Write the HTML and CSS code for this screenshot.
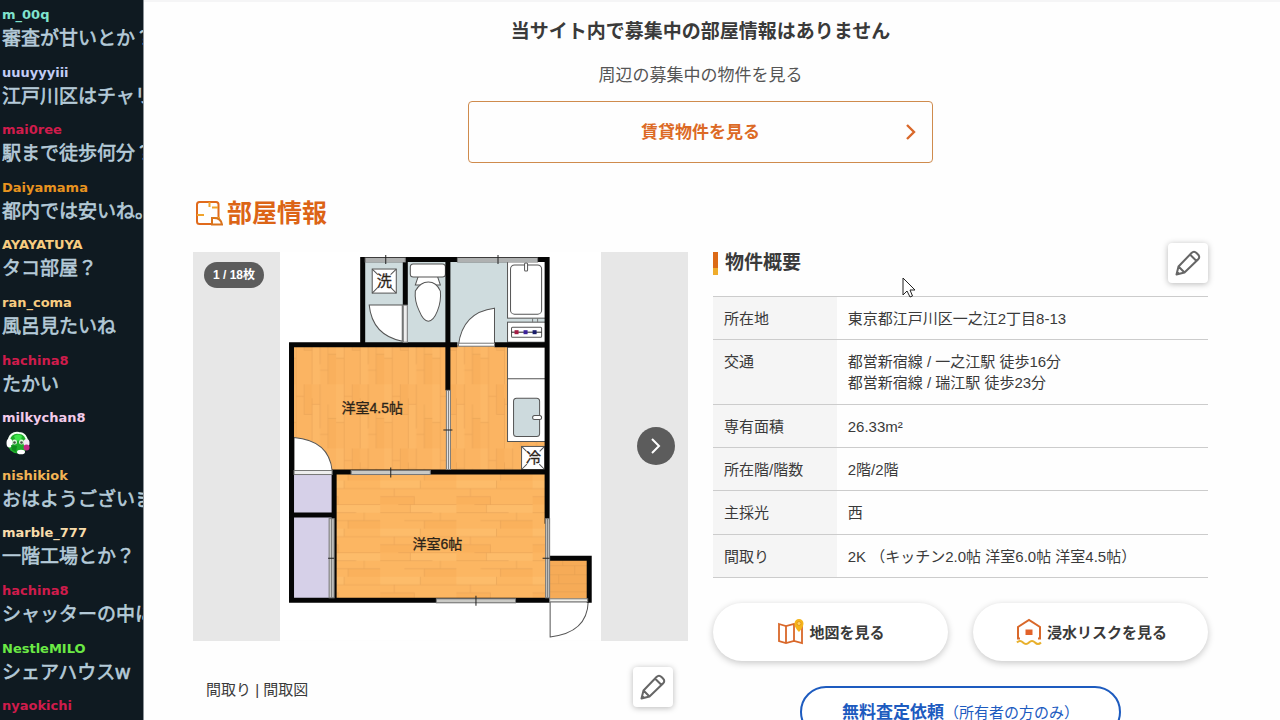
FILE: index.html
```html
<!DOCTYPE html>
<html lang="ja">
<head>
<meta charset="utf-8">
<meta name="viewport" content="width=device-width, initial-scale=1">
<title>部屋情報</title>
<link rel="stylesheet" href="styles.css">
</head>
<body>
<div class="layout">
  <aside class="chat">
    <ul class="chat-list">
      <li class="chat-item"><b class="chat-name mint">m_00q</b><p class="chat-text">審査が甘いとか？</p></li>
      <li class="chat-item"><b class="chat-name periwinkle">uuuyyyiii</b><p class="chat-text">江戸川区はチャリ</p></li>
      <li class="chat-item"><b class="chat-name crimson">mai0ree</b><p class="chat-text">駅まで徒歩何分？</p></li>
      <li class="chat-item"><b class="chat-name orange">Daiyamama</b><p class="chat-text">都内では安いね。</p></li>
      <li class="chat-item"><b class="chat-name sand">AYAYATUYA</b><p class="chat-text">タコ部屋？</p></li>
      <li class="chat-item"><b class="chat-name sand">ran_coma</b><p class="chat-text">風呂見たいね</p></li>
      <li class="chat-item"><b class="chat-name crimson">hachina8</b><p class="chat-text">たかい</p></li>
      <li class="chat-item"><b class="chat-name pink">milkychan8</b>
        <p class="chat-text emote-line"><svg class="emote" viewBox="0 0 24 24" aria-label="emote">
          <circle cx="12" cy="12" r="10.500" fill="#1fae2b"/>
          <path d="M3 12C2 4 8 1 13 2c5 0 8 4 8 9" fill="none" stroke="#f3fff3" stroke-width="2"/>
          <path d="M8 5q4-3 8 0l-1 4-5 1z" fill="#3ee64b"/>
          <ellipse cx="3.500" cy="12" rx="3" ry="4.500" fill="#fff"/>
          <ellipse cx="20.500" cy="12" rx="3" ry="4" fill="#f4e9f4"/>
          <circle cx="8.500" cy="11" r="2.500" fill="#d9f5d6"/><circle cx="15.500" cy="11" r="2.500" fill="#d9f5d6"/>
          <circle cx="8.500" cy="11.500" r="1.300" fill="#3c5540"/><circle cx="15.500" cy="11.500" r="1.300" fill="#3c5540"/>
          <path d="M5 14l6 1-1 6-4-2z" fill="#0f8c1d"/>
          <circle cx="20.500" cy="16.500" r="3" fill="#c22a86"/>
          <ellipse cx="15" cy="21" rx="4" ry="2.300" fill="#fff"/>
        </svg></p></li>
      <li class="chat-item"><b class="chat-name gold">nishikiok</b><p class="chat-text">おはようございます</p></li>
      <li class="chat-item"><b class="chat-name cream">marble_777</b><p class="chat-text">一階工場とか？</p></li>
      <li class="chat-item"><b class="chat-name crimson">hachina8</b><p class="chat-text">シャッターの中に</p></li>
      <li class="chat-item"><b class="chat-name lime">NestleMILO</b><p class="chat-text">シェアハウスw</p></li>
      <li class="chat-item"><b class="chat-name crimson">nyaokichi</b></li>
    </ul>
  </aside>

  <main class="page">
    <section class="vacancy">
      <h1 class="vacancy-title">当サイト内で募集中の部屋情報はありません</h1>
      <p class="vacancy-note">周辺の募集中の物件を見る</p>
      <a class="rent-link" href="#rent">
        <span class="rent-label">賃貸物件を見る</span>
        <svg class="rent-arrow" viewBox="0 0 12 18"><path d="M2 2l7 7-7 7" fill="none" stroke="#d9682a" stroke-width="2.400"/></svg>
      </a>
    </section>

    <h2 class="section-title">
      <svg class="section-icon" viewBox="0 0 28 26" fill="none" stroke-width="2">
        <path d="M17 24H4.500Q2 24 2 21.500V4.500Q2 2 4.500 2H21q2.500 0 2.500 2.500V17" stroke="#e06a1c"/>
        <path d="M14.500 2v5M2 15h7M17 7.500h6M17 24v-6h8" stroke="#f0a32c"/>
        <path d="M17 24.500v-6.500q9-1 10 6.500z" stroke="#d9731c"/>
      </svg>
      部屋情報
    </h2>

    <div class="columns">
      <section class="media">
        <div class="gallery">
          <span class="counter">1 / 18枚</span>
          <svg class="plan" viewBox="280 252 321 388" role="img" aria-label="間取図">
            <defs>
              <pattern id="woodV" width="48" height="64" patternUnits="userSpaceOnUse">
                <rect width="48" height="64" fill="#fbb462"/>
                <path d="M0 0h8v38H0zM24 20h8v44h-8z" fill="#fcb867"/>
                <path d="M16 0h8v30h-8zM40 34h8v30h-8z" fill="#f9b05d"/>
                <path d="M8 0v64M16 0v30M24 14v50M32 0v44M40 20v44M0 38h8M8 12h8M16 30h8M24 20h8M32 50h8M40 34h8" stroke="#e39f53" stroke-width=".5" fill="none"/>
              </pattern>
              <pattern id="woodH" width="76" height="48" patternUnits="userSpaceOnUse">
                <rect width="76" height="48" fill="#fcb662"/>
                <path d="M0 0h40v8H0zM30 24h46v8H30z" fill="#fdbc6a"/>
                <path d="M0 16h34v8H0zM44 40h32v8H44z" fill="#fab15c"/>
                <path d="M0 8h76M0 16h34M18 24h58M0 32h52M24 40h52M40 0v8M14 8v8M34 16v8M30 24v8M60 32v8M44 40v8" stroke="#e39f53" stroke-width=".5" fill="none"/>
              </pattern>
            </defs>
            <rect x="280" y="252" width="321" height="388" fill="#fff"/>
            <!-- floors -->
            <rect x="363" y="259" width="184" height="85" fill="#cfdcde"/>
            <rect x="292" y="345" width="156" height="126" fill="url(#woodV)"/>
            <rect x="448" y="345" width="99" height="126" fill="url(#woodV)"/>
            <rect x="334" y="472" width="213" height="127" fill="url(#woodH)"/>
            <rect x="549" y="557" width="40" height="41" fill="#f6ab57"/>
            <path d="M549 565h38M549 574h38M549 583h38M549 591h38M562 557v8M574 565v9M558 574v9" stroke="#e39f53" stroke-width=".5"/>
            <rect x="292" y="473" width="40" height="126" fill="#d6d0e8"/>
            <!-- fixtures -->
            <g fill="#fff" stroke="#555" stroke-width="1">
              <rect x="372" y="269" width="24" height="24"/>
              <path d="M372 269l24 24M396 269l-24 24" stroke-dasharray="8 18 20"/>
              <path d="M402 305v36Q372 335 369 305z"/>
              <path d="M418 276l-3 9h25l-3-9z"/>
              <rect x="410" y="264" width="35" height="13" rx="3"/>
              <path d="M415 291q5-9 13-9t12 9q1 10-3 20-4 10-9 10t-9-10q-5-10-4-20z"/>
              <rect x="507" y="261" width="38" height="57"/>
              <rect x="510" y="265" width="31" height="49" rx="4"/>
              <rect x="524" y="263" width="3" height="8" rx="1"/>
              <rect x="507" y="322" width="38" height="20"/>
              <rect x="511" y="327" width="30" height="10" rx="1"/>
              <path d="M494 345v-37q-32 4-36 37z"/>
              <path d="M507 347v94h39v-94zM507 378.500h39"/>
              <rect x="513" y="398" width="26" height="38" rx="3" fill="#cddadd"/>
              <rect x="532" y="415" width="9" height="4" rx="2"/>
              <rect x="521" y="446" width="23" height="23"/>
              <path d="M521 446l23 23M544 446l-23 23" stroke-dasharray="7 18 20"/>
              <path d="M294 437q35 3 38 33h-38z"/>
              <path d="M549.500 601v35q37-4 38-35z"/>
            </g>
            <path d="M511 332h30" stroke="#222"/>
            <path d="M514 330h4v4h-4z" fill="#a51d46"/><path d="M523 330h4v4h-4z" fill="#3c219b"/><path d="M532 330h4v4h-4z" fill="#191c6b"/>
            <path d="M532 318v4M537 318v4" stroke="#777"/>
            <!-- walls -->
            <g fill="none" stroke="#050505" stroke-width="5">
              <path d="M362.500 257v87M360 259.500h189M546.500 257v266M291.500 342v260M289 344.500h168M494 344.500h54M405 259v46M447.500 259v131M332 471.500h216M334 470v132M289 599.500h260M291 514.500h43M549 557.500h42M588.500 555v47"/>
            </g>
            <!-- windows and sliding doors -->
            <g fill="#c9c9c5" stroke="#777" stroke-width="1">
              <path d="M365 258h40v4h-40zM457 258h80v4h-80z" fill="#e8ecec"/>
              <path d="M365 260h40M457 260h80"/>
              <rect x="446" y="390" width="4" height="79" fill="#eee"/><path d="M448 390v79"/>
              <rect x="351" y="470" width="79" height="4"/><rect x="436" y="598" width="79" height="4"/>
              <rect x="545" y="518" width="4" height="79"/><path d="M547 518v79"/>
              <rect x="329" y="518" width="5" height="79"/><path d="M331.500 518v79"/>
              <rect x="403" y="305" width="4" height="37" fill="#eee"/>
              <rect x="294" y="470" width="38" height="4" fill="#eee"/>
              <rect x="549" y="598" width="38" height="3" fill="#f3f3ef"/>
              <rect x="458" y="343" width="36" height="3" fill="#fff"/>
            </g>
            <path d="M385.500 255v9M497.500 255v9M443 429.500h9M390.500 467v10M475.500 595v10M542 557.500h7M328 557.500h6" stroke="#222"/>
            <g class="plan-text">
              <text x="384" y="286" class="plan-mark">洗</text>
              <text x="533" y="463" class="plan-mark">冷</text>
              <text x="372" y="413">洋室4.5帖</text>
              <text x="437" y="548">洋室6帖</text>
            </g>
          </svg>
          <button class="next" type="button" aria-label="次へ">
            <svg viewBox="0 0 12 18"><path d="M2 2l7 7-7 7" fill="none" stroke="#fff" stroke-width="2"/></svg>
          </button>
        </div>
        <div class="caption">
          <span class="caption-text">間取り | 間取図</span>
          <button class="edit" type="button" aria-label="編集">
            <svg viewBox="0 0 26 26"><path d="M1.500 24.500L3.500 16.500 16.500 3q2.500-2.500 5 0l1.500 1.500q2.500 2.500 0 5L9.500 22.500zM15 4.500l6.500 6.500M3.500 16.500l6 6M2 22l2 2"/></svg>
          </button>
        </div>
      </section>

      <section class="summary">
        <header class="summary-head">
          <h3 class="summary-title">物件概要</h3>
          <button class="edit" type="button" aria-label="編集">
            <svg viewBox="0 0 26 26"><path d="M1.500 24.500L3.500 16.500 16.500 3q2.500-2.500 5 0l1.500 1.500q2.500 2.500 0 5L9.500 22.500zM15 4.500l6.500 6.500M3.500 16.500l6 6M2 22l2 2"/></svg>
          </button>
        </header>
        <table class="specs">
          <tbody>
            <tr><th scope="row">所在地</th><td>東京都江戸川区一之江2丁目8-13</td></tr>
            <tr><th scope="row">交通</th><td>都営新宿線 / 一之江駅 徒歩16分<br>都営新宿線 / 瑞江駅 徒歩23分</td></tr>
            <tr><th scope="row">専有面積</th><td>26.33m²</td></tr>
            <tr><th scope="row">所在階/階数</th><td>2階/2階</td></tr>
            <tr><th scope="row">主採光</th><td>西</td></tr>
            <tr><th scope="row">間取り</th><td>2K （キッチン2.0帖 洋室6.0帖 洋室4.5帖）</td></tr>
          </tbody>
        </table>
        <div class="actions">
          <button class="pill" type="button">
            <svg viewBox="0 0 28 28" fill="none" stroke="#d9682a" stroke-width="1.800">
              <path d="M3 6l7 2 8-2 8 2v17l-8-2-8 2-7-2zM10 8v17M18 6v17"/>
              <path d="M23 14q-5-5-4.500-8.500a4.500 4.500 0 0 1 9 0Q27.500 9 23 14z" fill="#f5b51b" stroke="none"/>
              <circle cx="23" cy="5.500" r="2" fill="#f9d36b" stroke="#e89a1a" stroke-width="1"/>
            </svg>
            地図を見る
          </button>
          <button class="pill" type="button">
            <svg viewBox="0 0 28 28" fill="none" stroke="#d9682a" stroke-width="2">
              <path d="M6 20.500H4V9L15 2l11 7v11.500h-2"/>
              <path d="M11.500 11.500h7v5.500h-7z" fill="#e2622a" stroke="none"/>
              <path d="M3 24.500q3-3 6 0t6 0 6 0 6 0" stroke="#e8b02c"/>
            </svg>
            浸水リスクを見る
          </button>
        </div>
        <button class="assess" type="button"><b>無料査定依頼</b><span>（所有者の方のみ）</span></button>
      </section>
    </div>
  </main>
</div>
<svg class="cursor" viewBox="0 0 14 22" aria-hidden="true"><path d="M1 1v17l4-4 3 6 2.500-1-2.500-6h5z" fill="#fff" stroke="#222" stroke-width="1"/></svg>
</body>
</html>
```
FILE: styles.css
```css
* { box-sizing: border-box; }
body {
  margin: 0;
  background: #fefefe;
  color: #3a3a3a;
  font-family: "Liberation Sans", "Noto Sans CJK JP", sans-serif;
  font-size: 15px;
  line-height: 21px;
}
h1, h2, h3, p, ul { margin: 0; padding: 0; }
button { font: inherit; color: inherit; cursor: pointer; }

.layout { display: flex; height: 100vh; overflow: hidden; }

/* chat sidebar */
.chat {
  flex: 0 0 144px;
  overflow: hidden;
  background: #0f1a21;
  border-right: 1px solid #8b9297;
}
.chat-list { list-style: none; display: grid; grid-auto-rows: 8vh; padding: 5px 0 0 2px; }
.chat-item { white-space: nowrap; }
.chat-name {
  display: block;
  font-family: "DejaVu Sans", sans-serif;
  font-size: 13px;
  line-height: 20px;
}
.chat-text {
  font-family: "Noto Sans", "Noto Sans CJK JP", sans-serif;
  font-size: 19px;
  line-height: 26px;
  color: #b5cbd9;
  -webkit-text-stroke: 0.6px #b5cbd9;
}
.emote-line { padding: 3px 0 0 4px; }
.emote { display: block; width: 24px; height: 24px; }
.mint { color: #7fe3cd; }
.periwinkle { color: #c3cdf6; }
.crimson { color: #d01c4c; }
.orange { color: #e8931f; }
.sand { color: #f8cc80; }
.pink { color: #f3cbea; }
.gold { color: #f3b455; }
.cream { color: #f7dcab; }
.lime { color: #6bea45; }

/* page */
.page {
  flex: 1;
  min-width: 0;
  overflow: hidden;
  padding: 16px 72px 0 49px;
  border-top: 2px solid #f5f5f6;
}
.vacancy { display: flex; flex-direction: column; align-items: center; }
.vacancy-title { font-size: 19px; line-height: 28px; }
.vacancy-note { margin-top: 18px; color: #555; font-size: 17px; line-height: 24px; }
.rent-link {
  display: flex;
  align-items: center;
  justify-content: center;
  position: relative;
  width: 465px;
  max-width: 100%;
  height: 62px;
  margin-top: 13px;
  border: 1px solid #cf8b4d;
  border-radius: 4px;
  color: #dc6a26;
  font-size: 17px;
  font-weight: bold;
  text-decoration: none;
}
.rent-arrow { position: absolute; right: 15px; width: 12px; height: 18px; }
.section-title {
  display: flex;
  align-items: center;
  gap: 4px;
  margin-top: 32px;
  padding-left: 2px;
  color: #dc6416;
  font-size: 25px;
  line-height: 36px;
}
.section-icon { width: 28px; height: 26px; }
.columns { display: grid; grid-template-columns: 1fr 1fr; gap: 25px; margin-top: 12px; }

/* gallery */
.media { padding-top: 9px; }
.gallery { position: relative; display: flex; justify-content: center; background: #e7e7e7; }
.plan { display: block; width: 65%; }
.plan-text { font-size: 14px; text-anchor: middle; fill: #2c2419; stroke: #2c2419; stroke-width: .3; }
.plan-text .plan-mark { font-size: 15px; }
.counter {
  position: absolute;
  top: 10px;
  left: 11px;
  padding: 0 9px;
  border-radius: 13px;
  background: #5c5c5c;
  color: #fff;
  font-size: 12px;
  font-weight: bold;
  line-height: 26px;
}
.next {
  position: absolute;
  top: 50%;
  right: 13px;
  display: grid;
  place-items: center;
  width: 38px;
  height: 38px;
  margin-top: -19px;
  padding: 0;
  border: 0;
  border-radius: 50%;
  background: #5c5c5c;
}
.next svg { width: 12px; height: 18px; }
.caption {
  display: flex;
  align-items: center;
  justify-content: space-between;
  padding: 26px 15px 0 13px;
}
.caption-text { padding-top: 6px; }
.edit {
  display: grid;
  place-items: center;
  width: 40px;
  height: 40px;
  padding: 0;
  border: 0;
  border-radius: 4px;
  background: #fff;
  box-shadow: 0 1px 6px rgba(0, 0, 0, .28);
}
.edit svg { width: 26px; height: 26px; fill: none; stroke: #666; stroke-width: 2; stroke-linejoin: round; }

/* summary */
.summary-head { display: flex; align-items: center; justify-content: space-between; }
.summary-title { display: flex; align-items: center; gap: 7px; font-size: 19px; line-height: 28px; }
.summary-title::before {
  content: "";
  width: 5px;
  height: 23px;
  background: linear-gradient(#dc6a16 70%, #efac2c 70%);
}
.specs { width: 100%; height: 282px; margin-top: 13px; border-collapse: collapse; }
.specs th, .specs td {
  padding: 11px 11px 10px;
  border-top: 1px solid #ccc;
  border-bottom: 1px solid #ccc;
  text-align: left;
  vertical-align: top;
  font-weight: normal;
}
.specs th { width: 25%; background: #f5f5f5; }
.actions { display: grid; grid-template-columns: 1fr 1fr; gap: 25px; margin-top: 25px; }
.pill {
  display: flex;
  align-items: center;
  justify-content: center;
  gap: 5px;
  height: 58px;
  border: 0;
  border-radius: 29px;
  background: #fff;
  box-shadow: 0 2px 7px rgba(0, 0, 0, .22);
  font-weight: bold;
}
.pill svg { width: 28px; height: 28px; }
.assess {
  display: flex;
  align-items: center;
  justify-content: center;
  width: 65%;
  height: 52px;
  margin: 25px auto 0;
  border: 2px solid #1d5bbf;
  border-radius: 26px;
  background: #fff;
  color: #1d5bbf;
}
.assess b { font-size: 17px; }

.cursor { position: absolute; left: 902px; top: 277px; width: 14px; height: 22px; }
```
